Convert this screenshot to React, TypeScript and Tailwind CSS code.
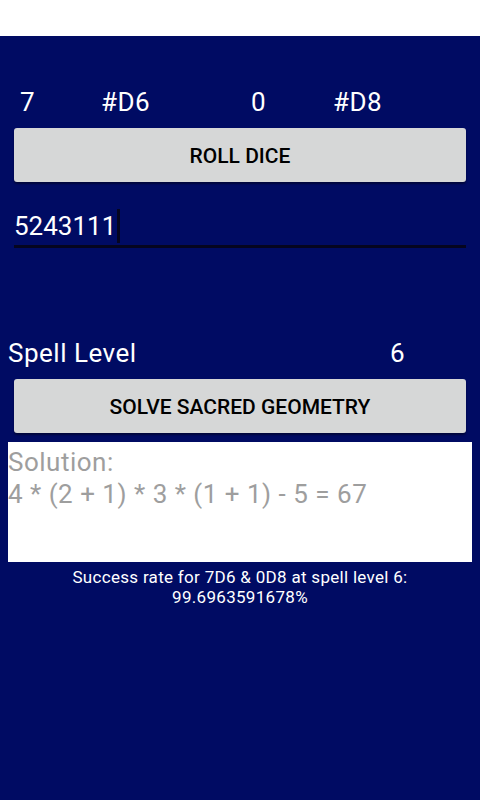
export default function App() {
  return (
    <div className="w-[480px] h-[800px] bg-white flex flex-col" style={{ fontFamily: "Roboto, 'Noto Sans', sans-serif" }}>
      <div className="h-[36px] bg-white" />
      <div className="flex-1 bg-[#000b63] flex flex-col">
        <div className="h-[50px]" />
        <div className="flex items-center h-[32px] text-white text-[26px] tracking-[0.5px]">
          <span className="w-[101px] pl-[20px]">7</span>
          <span className="w-[150px]">#D6</span>
          <span className="w-[82px]">0</span>
          <span>#D8</span>
        </div>
        <div className="px-[14px] mt-[10px]">
          <button className="w-full h-[54px] pt-[3px] bg-[#d6d7d7] rounded-[3px] text-[21px] font-medium text-black shadow-[0_2px_2px_rgba(0,0,0,0.4)]">
            ROLL DICE
          </button>
        </div>
        <div className="mx-[14px] mt-[24px] h-[42px] border-b-[3px] border-[#05051f] flex items-center">
          <span className="text-white text-[26px] leading-none">5243111</span>
          <span className="w-[3px] h-[34px] bg-[#05051f] ml-[1px]" />
        </div>
        <div className="h-[88px]" />
        <div className="flex items-center h-[34px] text-white text-[26px] tracking-[0.5px]">
          <span className="w-[390px] pl-[8px]">Spell Level</span>
          <span>6</span>
        </div>
        <div className="px-[14px] mt-[9px]">
          <button className="w-full h-[54px] pt-[3px] bg-[#d6d7d7] rounded-[3px] text-[21px] font-medium text-black shadow-[0_2px_2px_rgba(0,0,0,0.4)]">
            SOLVE SACRED GEOMETRY
          </button>
        </div>
        <div className="mx-[8px] mt-[9px] h-[120px] bg-white text-[#9e9e9e] text-[26px] tracking-[0.5px] leading-[32px] pt-[4px]">
          <div>Solution:</div>
          <div>4 * (2 + 1) * 3 * (1 + 1) - 5 = 67</div>
        </div>
        <div className="text-white text-[17px] tracking-[0.3px] leading-[20px] text-center mt-[5px]">
          <div>Success rate for 7D6 &amp; 0D8 at spell level 6:</div>
          <div>99.6963591678%</div>
        </div>
      </div>
    </div>
  );
}
